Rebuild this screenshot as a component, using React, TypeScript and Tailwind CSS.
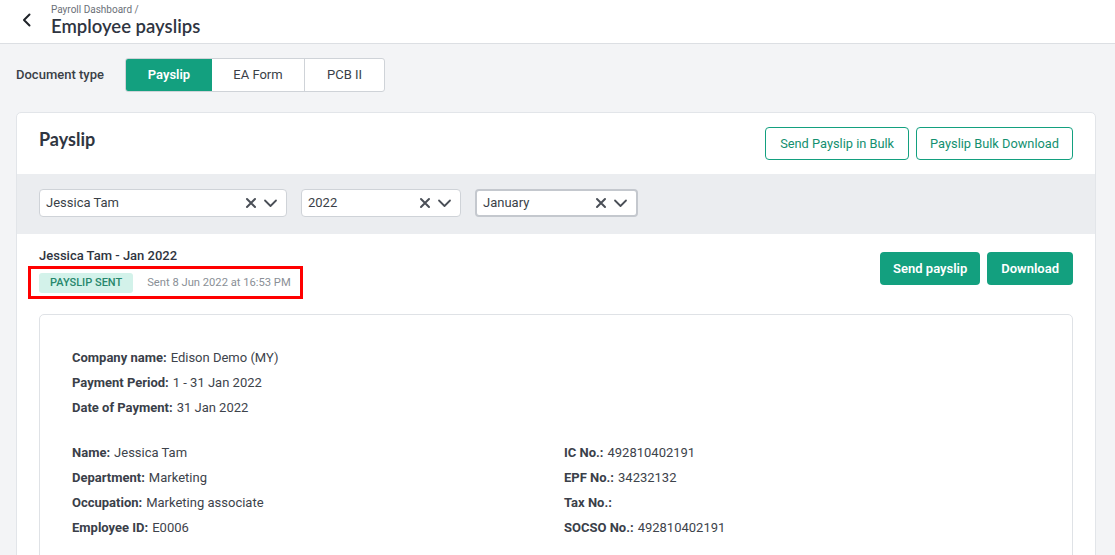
import React from 'react';

const Select = ({ value, width, focused }: { value: string; width: string; focused?: boolean }) => (
  <div
    className={`${width} h-[28px] bg-white rounded flex items-center pl-[6px] pr-[8px] ${
      focused ? 'border-2 border-[#c4c8ce]' : 'border border-[#cfd3d8]'
    }`}
  >
    <span className="flex-1 text-[13px] text-[#3a3f47]">{value}</span>
    <svg width="12" height="12" viewBox="0 0 12 12" className="mr-[6px]">
      <path d="M2 2 L10 10 M10 2 L2 10" stroke="#4a4f57" strokeWidth="2" strokeLinecap="round" />
    </svg>
    <svg width="15" height="10" viewBox="0 0 15 10">
      <path d="M2 2.5 L7.5 8 L13 2.5" stroke="#4a4f57" strokeWidth="1.8" fill="none" strokeLinecap="round" strokeLinejoin="round" />
    </svg>
  </div>
);

const Field = ({ label, value }: { label: string; value?: string }) => (
  <div className="h-[25px] flex items-center text-[13px] text-[#3d434b]">
    <span className="font-bold text-[#3a4049]">{label}</span>
    {value && <span className="ml-[4px]">{value}</span>}
  </div>
);

export default function App() {
  return (
    <div className="w-[1115px] h-[555px] overflow-hidden bg-[#f3f4f6]" style={{ fontFamily: 'Roboto, "Liberation Sans", sans-serif' }}>
      {/* Header */}
      <div className="h-[44px] bg-white border-b border-[#dcdfe3] flex items-center">
        <div className="w-[51px] flex justify-center pl-[2px] pb-[3px]">
          <svg width="12" height="14" viewBox="0 0 12 14">
            <path d="M8.5 1.5 L3 7 L8.5 12.5" stroke="#1f2329" strokeWidth="2" fill="none" strokeLinecap="round" strokeLinejoin="round" />
          </svg>
        </div>
        <div className="flex flex-col pb-[5px] pt-[3px]">
          <span className="text-[10px] leading-[12px] text-[#6b7078]">Payroll Dashboard /</span>
          <span className="text-[18.5px] leading-[21px] font-semibold text-[#2f3541]" style={{ fontFamily: 'Lato, sans-serif' }}>
            Employee payslips
          </span>
        </div>
      </div>

      {/* Document type */}
      <div className="flex items-center pl-[16px] pt-[14px]">
        <span className="text-[13px] font-medium text-[#3a3f47] w-[109px]">Document type</span>
        <div className="flex h-[34px] border border-[#cfd3d8] rounded-[3px] overflow-hidden bg-white text-[13px]">
          <div className="w-[86px] bg-[#13a07f] text-white font-semibold flex items-center justify-center">Payslip</div>
          <div className="w-[93px] border-r border-[#cfd3d8] text-[#3a3f47] flex items-center justify-center">EA Form</div>
          <div className="w-[79px] text-[#3a3f47] flex items-center justify-center">PCB II</div>
        </div>
      </div>

      {/* Card */}
      <div className="mx-[16px] mt-[20px] w-[1080px] bg-white border border-[#e2e5e9] rounded-[5px]">
        <div className="h-[61px] flex items-start justify-between pl-[22px] pr-[22px] pt-[14px]">
          <span className="text-[18px] font-bold text-[#2f3541] -mt-[1px]" style={{ fontFamily: 'Lato, sans-serif' }}>
            Payslip
          </span>
          <div className="flex gap-[7px]">
            <button className="h-[33px] px-[14px] border border-[#13a07f] rounded-[4px] text-[12.8px] text-[#13906f]">Send Payslip in Bulk</button>
            <button className="h-[33px] px-[13px] border border-[#13a07f] rounded-[4px] text-[12.8px] text-[#13906f]">Payslip Bulk Download</button>
          </div>
        </div>

        <div className="h-[60px] bg-[#ebedf0] flex items-center gap-[14px] pl-[22px] pb-[2px]">
          <Select value="Jessica Tam" width="w-[248px]" />
          <Select value="2022" width="w-[160px]" />
          <Select value="January" width="w-[163px]" focused />
        </div>

        <div className="flex items-start justify-between pl-[22px] pr-[22px] pt-[14px]">
          <div className="flex flex-col">
            <span className="text-[13px] font-medium text-[#2f3541] leading-[16px]">Jessica Tam - Jan 2022</span>
            <div className="relative mt-[9px] flex items-center">
              <span className="h-[20px] px-[11px] flex items-center rounded-[3px] bg-[#d3f2ea] text-[#27876c] text-[11px] font-medium">
                PAYSLIP SENT
              </span>
              <span className="ml-[14px] text-[11.2px] text-[#8a8f96]">Sent 8 Jun 2022 at 16:53 PM</span>
              <span className="absolute -left-[11px] -top-[7px] -right-[12px] -bottom-[6px] border-[3px] border-[#ff0000]"></span>
            </div>
          </div>
          <div className="flex gap-[7px] pt-[4px]">
            <button className="h-[33px] px-[13px] rounded-[4px] bg-[#13a07f] text-white text-[13px] font-semibold">Send payslip</button>
            <button className="h-[33px] px-[14px] rounded-[4px] bg-[#13a07f] text-white text-[13px] font-semibold">Download</button>
          </div>
        </div>

        <div className="mx-[22px] mt-[21px] border border-[#dfe2e6] rounded-[5px] px-[32px] pt-[30px] pb-[20px]">
          <Field label="Company name:" value="Edison Demo (MY)" />
          <Field label="Payment Period:" value="1 - 31 Jan 2022" />
          <Field label="Date of Payment:" value="31 Jan 2022" />
          <div className="grid grid-cols-2 gap-x-4 mt-[20px]">
            <div>
              <Field label="Name:" value="Jessica Tam" />
              <Field label="Department:" value="Marketing" />
              <Field label="Occupation:" value="Marketing associate" />
              <Field label="Employee ID:" value="E0006" />
            </div>
            <div>
              <Field label="IC No.:" value="492810402191" />
              <Field label="EPF No.:" value="34232132" />
              <Field label="Tax No.:" />
              <Field label="SOCSO No.:" value="492810402191" />
            </div>
          </div>
        </div>
      </div>
    </div>
  );
}
